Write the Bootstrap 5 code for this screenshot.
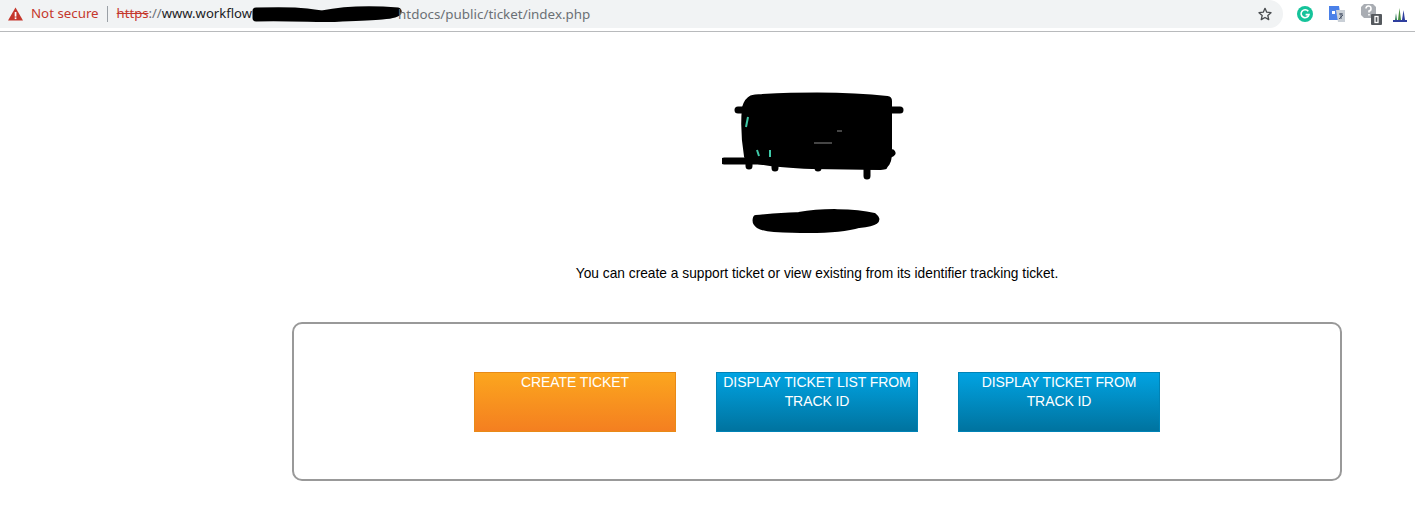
<!DOCTYPE html>
<html lang="en">
<head>
<meta charset="utf-8">
<title>Ticket</title>
<link rel="stylesheet" href="https://cdn.jsdelivr.net/npm/bootstrap@5.3.0/dist/css/bootstrap.min.css">
<style>
html,body{height:100%;overflow:hidden}
body{background:#fff;color:#000;font-family:"Liberation Sans",Arial,sans-serif;font-size:14px}
.chrome-bar{height:32px;border-bottom:1px solid #b8babc}
.omnibox{width:1283px;height:28px;background:#f1f3f4;border-radius:0 14px 14px 0;padding:0 8px;font-family:"Noto Sans",sans-serif;font-size:13.3px;white-space:nowrap;flex-shrink:0}
.warn-label{color:#c5372c;margin-left:8px}
.url-sep{width:1px;height:16px;background:#9aa0a6;margin:0 9px 0 8px}
.url-scheme{color:#c5372c;text-decoration:line-through;font-size:13.1px}
.url-host{color:#202124;font-size:13.1px}
.url-slash{color:#6b7075;font-size:13.1px}
.url-path{color:#6b7075;font-size:13.4px;margin-left:-4px}
.star-icon{margin-right:2px}
.ext-icons{height:27px;padding-left:14px}
.ext-b{margin-left:15px}
.ext-c{margin-left:15px}
.ext-d{margin-left:9px}
.page-main{margin-left:292px;width:1050px}
.logo-zone{height:234px;padding-top:56px}
.intro-line{height:56px;margin:0;line-height:16px;font-size:13.75px}
.action-panel{height:159px;border:2px solid #999;border-radius:10px;padding-top:48px;gap:40px}
.ticket-btn{width:202px;height:60px;padding:0 4px;border-radius:0;color:#fff;font-size:14px;line-height:19px;text-transform:uppercase;text-align:center;vertical-align:top;letter-spacing:-.08px}
.ticket-btn:hover,.ticket-btn:active{color:#fff}
.ticket-orange{background:linear-gradient(#fca61e,#f47f20);border:1px solid #e88a17}
.ticket-blue{background:linear-gradient(#01a3e2,#00739f);border:1px solid #0083b6}
</style>
</head>
<body>
<div class="chrome-bar d-flex align-items-start">
  <div class="omnibox d-flex align-items-center">
    <svg width="15" height="14" viewBox="0 0 15 14"><path d="M7.5 .5 15 13.5H0Z" fill="#c5372c"/><rect x="6.7" y="5" width="1.7" height="4.6" fill="#fff"/><rect x="6.7" y="10.4" width="1.7" height="1.7" fill="#fff"/></svg>
    <span class="warn-label">Not secure</span>
    <span class="url-sep"></span>
    <span class="url-scheme">https</span><span class="url-slash">://</span><span class="url-host">www.workflow</span><svg width="150" height="20" viewBox="0 0 150 20" class="flex-shrink-0"><path d="M4 7C40 6 50 7 70 10 90 6 120 5 146 7 148 12 120 13 90 14 70 16 50 13 4 14Z" fill="#000" stroke="#000" stroke-width="7" stroke-linejoin="round"/></svg><span class="url-path">htdocs/public/ticket/index.php</span>
    <svg class="ms-auto star-icon" width="16" height="16" viewBox="0 0 24 24"><path d="M12 3.5 14.6 9.3 21 10 16.2 14.2 17.6 20.5 12 17.2 6.4 20.5 7.8 14.2 3 10 9.4 9.3Z" fill="none" stroke="#4a4d50" stroke-width="2" stroke-linejoin="round"/></svg>
  </div>
  <div class="ext-icons d-flex align-items-center">
    <svg width="16" height="16" viewBox="0 0 16 16"><circle cx="8" cy="8" r="8" fill="#15c39a"/><path d="M11.3 5.3A4 4 0 1 0 12 8.6H8.6" fill="none" stroke="#fff" stroke-width="1.6"/></svg>
    <svg class="ext-b" width="18" height="18" viewBox="0 0 18 18"><path d="M1 1H11L13 15H1Z" fill="#4a80e8"/><path d="M8 5H17V17H10Z" fill="#c9cfd6"/><path d="M4 6H7V9H4Z" fill="#fff"/><path d="M11 9H15M13 8V14M11 14 15 10" stroke="#4a5568" stroke-width="1" fill="none"/></svg>
    <svg class="ext-c" width="22" height="22" viewBox="0 0 22 22"><path d="M3 1H12L15 4V12L12 15H3L0 12V4Z" fill="#a9adb3"/><path d="M5 5.5A2.5 2.5 0 1 1 8 8V9.5M8 11V12.5" fill="none" stroke="#fff" stroke-width="1.6"/><rect x="10" y="11" width="11" height="11" rx="1" fill="#55595e"/><rect x="14" y="13.5" width="3" height="6" fill="none" stroke="#fff" stroke-width="1.3"/></svg>
    <svg class="ext-d" width="16" height="16" viewBox="0 0 16 16"><path d="M1 15H15" stroke="#2f3e9e" stroke-width="2"/><path d="M3 14 4 7 5 14Z" fill="#2f7d5a"/><path d="M6 14 7.5 2 9 14Z" fill="#4a8f3f"/><path d="M10 14 11.5 4 13 14Z" fill="#2f3e9e"/></svg>
  </div>
</div>
<main class="page-main">
  <div class="logo-zone d-flex flex-column align-items-center">
    <svg width="190" height="119" viewBox="0 0 190 119">
      <path d="M25 20C28 11 32 11 40 11 80 9 130 9 165 13V60C165 70 165 76 158 77L90 76C60 75 35 72 27 68 24 50 24 30 25 20Z" fill="#000" stroke="#000" stroke-width="10" stroke-linejoin="round"/>
      <path d="M16 22H178" stroke="#000" stroke-width="7" stroke-linecap="round" fill="none"/>
      <path d="M2 73H90" stroke="#000" stroke-width="7" stroke-linecap="round" fill="none"/>
      <path d="M27 66V78M53 66V80M96 72V80M145 76V88M150 78H162M160 70 170 65" stroke="#000" stroke-width="7" stroke-linecap="round" fill="none"/>
      <path d="M26 29 24 39" stroke="#3fc9a8" stroke-width="2" fill="none"/>
      <path d="M35 62 37 68M48 62V69" stroke="#3fc9a8" stroke-width="2" fill="none"/>
      <path d="M92 55H110M115 43H120" stroke="#8a8a8a" stroke-width="1.2" fill="none"/>
    </svg>
    <svg width="136" height="28" viewBox="0 0 136 28"><path d="M7 11C25 9 36 9 50 8 72 4 105 4 125 9 130 13 128 16 110 18 90 24 60 24 25 22 10 21 5 17 7 11Z" fill="#000" stroke="#000" stroke-width="6" stroke-linejoin="round"/></svg>
  </div>
  <p class="intro-line text-center">You can create a support ticket or view existing from its identifier tracking ticket.</p>
  <section class="action-panel d-flex justify-content-center align-items-start">
    <a class="btn ticket-btn ticket-orange" href="#">Create ticket</a>
    <a class="btn ticket-btn ticket-blue" href="#">Display ticket list from track ID</a>
    <a class="btn ticket-btn ticket-blue" href="#">Display ticket from track ID</a>
  </section>
</main>
<script src="https://cdn.jsdelivr.net/npm/bootstrap@5.3.0/dist/js/bootstrap.bundle.min.js"></script>
</body>
</html>
